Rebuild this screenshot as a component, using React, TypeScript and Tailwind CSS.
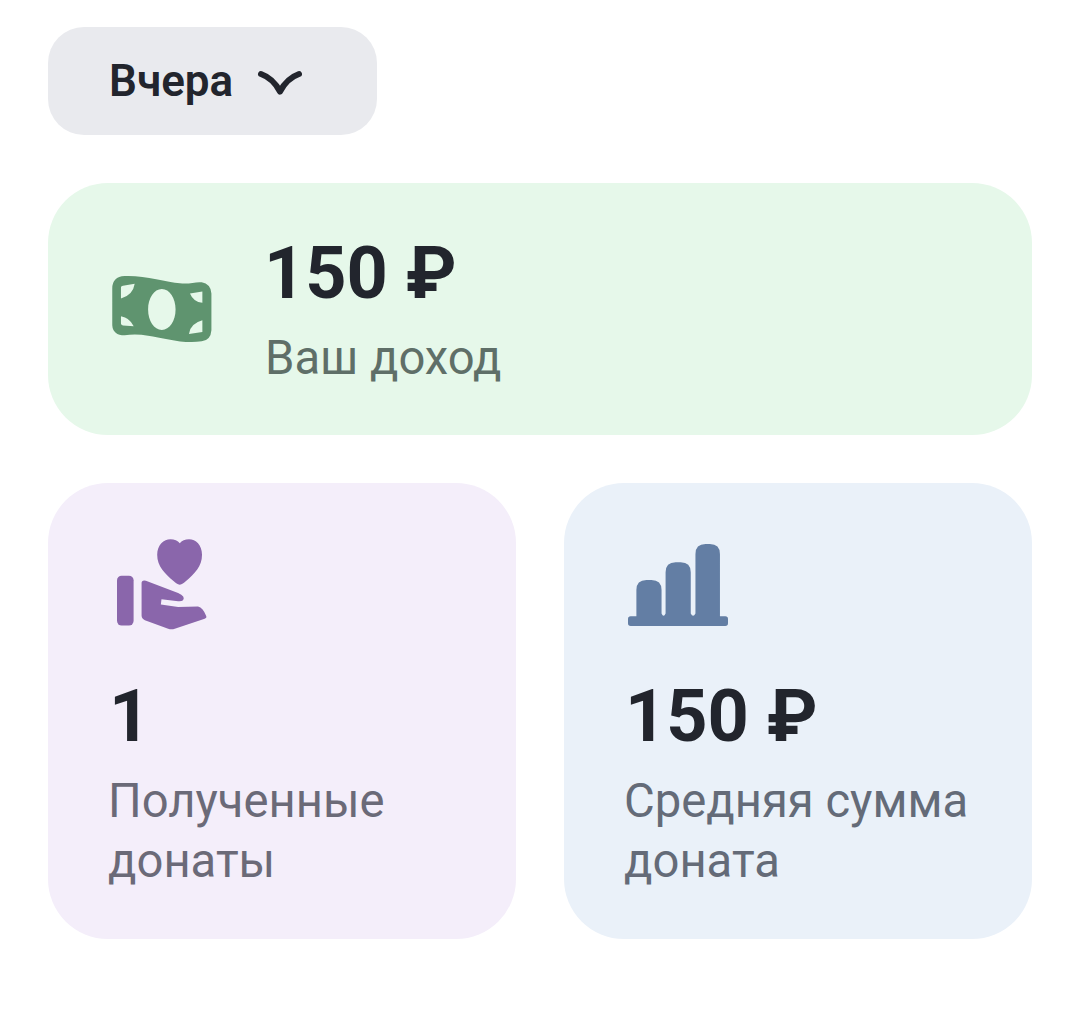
export default function App() {
  return (
    <div className="min-h-[1010px] w-[1080px] bg-white px-12 pt-[27px] font-['Roboto',sans-serif]">
      <div className="flex h-[108px] w-[329px] items-center rounded-[36px] bg-[#e9eaee] pl-[61px]">
        <span className="text-[44px] font-semibold leading-none text-[#22252d]">Вчера</span>
        <svg className="ml-[24px] mt-[3px] h-[26px] w-[46px]" viewBox="0 0 46 26" fill="none">
          <path d="M4 4C11 6.5 18 12 23 21.5C28 12 35 6.5 42 4" stroke="#22252d" strokeWidth="6" strokeLinecap="round" strokeLinejoin="round" />
        </svg>
      </div>

      <div className="mt-12 flex h-[252px] items-center rounded-[60px] bg-[#e6f8ea] pl-16">
        <svg className="h-[68px] w-[100px]" viewBox="68 135 297 203" fill="#5f946f" fillRule="evenodd">
          <path d="M68 175Q68 140 105 138C160 135 230 155 270 160C300 163 315 155 335 157Q362 162 364 190L364 300Q362 330 335 333C280 342 220 322 175 316C150 312 125 312 105 315Q70 315 68 285ZM216 177C193 177 175 204 175 238C175 272 193 299 216 299C239 299 257 272 257 238C257 204 239 177 216 177ZM94 172Q94 168 100 167L135 161Q130 195 94 205ZM94 258Q120 262 132 288L100 286Q94 285 94 280ZM300 190L337 184L337 218Q310 215 300 190ZM337 270L337 305L297 311Q300 280 337 270Z" />
        </svg>
        <div className="ml-[54px] mt-[2px]">
          <div className="ml-[-2px] text-[72px] font-bold leading-[84px] text-[#22252d]">150 ₽</div>
          <div className="ml-[-1px] mt-[12px] text-[47.2px] leading-[60px] text-[#5f6f68]">Ваш доход</div>
        </div>
      </div>

      <div className="mt-12 grid grid-cols-2 gap-12">
        <div className="h-[456px] rounded-[60px] bg-[#f4eefa] pl-[61px] pt-[56px]">
          <svg className="ml-[8px] h-[91px] w-[90px]" viewBox="51 28 271 273" fill="#8a66ab">
            <path d="M240 165C233 165 228 160 222 155C195 132 172 110 172 75C172 45 192 28 212 28C224 28 234 32 240 40C246 32 256 28 268 28C288 28 307 45 307 75C307 110 285 132 258 155C252 160 247 165 240 165Z" />
            <rect x="51" y="138" width="50" height="150" rx="14" />
            <path d="M125 160Q125 150 138 153L235 190Q258 200 250 212Q245 216 235 215L185 209L183 225L235 232L295 231Q310 235 320 260Q322 265 315 268L225 298Q215 301 205 298L135 272Q125 268 125 258Z" />
          </svg>
          <div className="mt-[45px] text-[72px] font-bold leading-[84px] text-[#22252d]">1</div>
          <div className="ml-[-1px] mt-[12px] text-[47.2px] leading-[60px] text-[#6b6a78]">
            Полученные
            <br />
            донаты
          </div>
        </div>
        <div className="h-[456px] rounded-[60px] bg-[#eaf1f9] pl-[61px] pt-[61px]">
          <svg className="ml-[3px] h-[82px] w-[100px]" viewBox="40 43 298 244" fill="#637ea4">
            <path d="M65 258L65 180Q65 150 95 150L110 150Q140 150 140 180L140 250Q146 264 152 250L152 127Q152 97 182 97L197 97Q227 97 227 127L227 250Q234 264 241 250L241 73Q241 43 271 43L284 43Q314 43 314 73L314 258L330 258Q338 258 338 266L338 279Q338 287 330 287L48 287Q40 287 40 279L40 266Q40 258 48 258Z" />
          </svg>
          <div className="mt-[49px] text-[72px] font-bold leading-[84px] text-[#22252d]">150 ₽</div>
          <div className="ml-[-1px] mt-[12px] text-[47.2px] leading-[60px] text-[#646b78]">
            Средняя сумма
            <br />
            доната
          </div>
        </div>
      </div>
    </div>
  );
}
